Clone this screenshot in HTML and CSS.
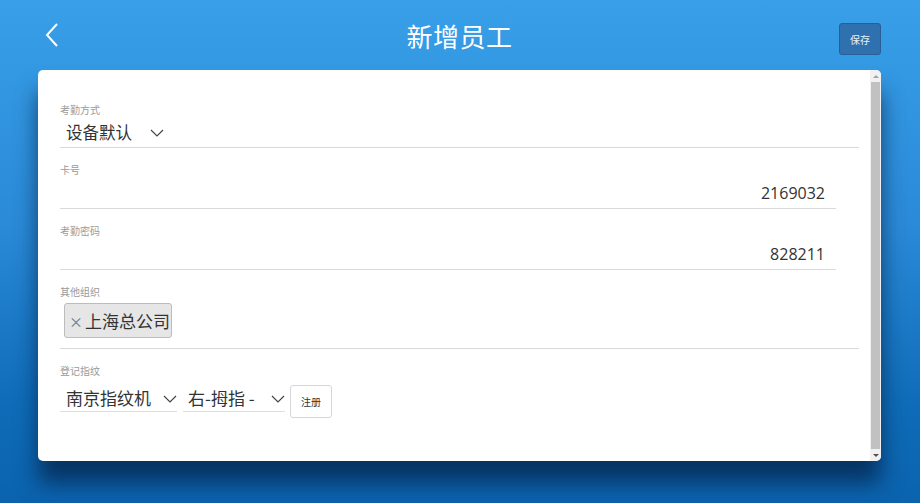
FILE: index.html
```html
<!DOCTYPE html>
<html lang="zh">
<head>
<meta charset="utf-8">
<link rel="stylesheet" href="styles.css">
</head>
<body>
<div class="page">
  <header class="topbar">
    <div class="side">
      <div class="back">
        <svg width="14" height="24" viewBox="0 0 14 24"><path d="M12 1 L2 12 L12 23" fill="none" stroke="#fff" stroke-width="2"/></svg>
      </div>
    </div>
    <h1 class="title">新增员工</h1>
    <div class="side right">
      <button class="save">保存</button>
    </div>
  </header>
  <main class="card">
    <div class="content">
      <div class="field first">
        <div class="label">考勤方式</div>
        <div class="select wide">
          <span class="sel-text">设备默认</span>
          <svg class="chev" width="14" height="8" viewBox="0 0 14 8"><path d="M1 1 L7 7 L13 1" fill="none" stroke="#444" stroke-width="1.2"/></svg>
        </div>
      </div>
      <div class="field">
        <div class="label">卡号</div>
        <div class="input">2169032</div>
      </div>
      <div class="field">
        <div class="label">考勤密码</div>
        <div class="input">828211</div>
      </div>
      <div class="field">
        <div class="label">其他组织</div>
        <div class="tags">
          <span class="tag"><span class="x">×</span>上海总公司</span>
        </div>
      </div>
      <div class="field">
        <div class="label">登记指纹</div>
        <div class="finger">
          <div class="select s1">
            <span class="sel-text">南京指纹机</span>
            <svg class="chev" width="14" height="8" viewBox="0 0 14 8"><path d="M1 1 L7 7 L13 1" fill="none" stroke="#444" stroke-width="1.2"/></svg>
          </div>
          <div class="select s2">
            <span class="sel-text">右-拇指 -</span>
            <svg class="chev" width="14" height="8" viewBox="0 0 14 8"><path d="M1 1 L7 7 L13 1" fill="none" stroke="#444" stroke-width="1.2"/></svg>
          </div>
          <button class="reg">注册</button>
        </div>
      </div>
    </div>
    <div class="scrollbar">
      <div class="arrow up"></div>
      <div class="thumb"></div>
      <div class="arrow down"></div>
    </div>
  </main>
</div>
</body>
</html>
```
FILE: styles.css
```css
* { box-sizing: border-box; }
html, body { margin: 0; padding: 0; }
body {
  width: 920px;
  height: 503px;
  overflow: hidden;
  font-family: "Noto Sans CJK SC", "Open Sans", sans-serif;
  background: linear-gradient(180deg, #389fe8 0%, #2a8ad8 45%, #0f6cb8 80%, #0b63ae 100%);
}
.page { padding: 0 39px 0 38px; }
.topbar {
  height: 70px;
  display: flex;
  align-items: flex-start;
}
.side {
  width: 60px;
  flex: none;
}
.side.right {
  display: flex;
  justify-content: flex-end;
}
.back {
  width: 14px;
  height: 24px;
  margin: 23px 0 0 7px;
}
.back svg { display: block; }
.title {
  flex: 1;
  margin: 18px 0 0 0;
  text-align: center;
  color: #fff;
  font-weight: 400;
  font-size: 26px;
  line-height: 36px;
  letter-spacing: 0.5px;
}
.save {
  width: 42px;
  height: 32px;
  margin-top: 23px;
  background: #2f70ae;
  border: 1px solid #285f97;
  border-radius: 3px;
  color: #e8f1fa;
  font-family: "Noto Sans CJK SC", sans-serif;
  font-size: 10px;
  padding: 0;
}
.card {
  height: 391px;
  background: #fff;
  border-radius: 5px;
  display: flex;
  overflow: hidden;
  box-shadow: 0 22px 22px rgba(4, 30, 65, 0.7);
}
.content {
  flex: 1;
  padding: 33px 11px 0 22px;
}
.field { margin-top: 15px; }
.field.first { margin-top: 0; }
.label {
  font-size: 10px;
  line-height: 14px;
  color: #9a9a9a;
}
.select {
  display: flex;
  align-items: center;
  border-bottom: 1px solid #d9d9d9;
  color: #333;
  font-size: 16.5px;
}
.select.wide { height: 31px; }
.sel-text { padding-left: 6px; line-height: 22px; white-space: nowrap; flex: none; }
.select.wide .chev { margin-left: 18px; margin-top: 1px; }
.input {
  width: calc(100% - 23px);
  height: 32px;
  border-bottom: 1px solid #d9d9d9;
  text-align: right;
  font-family: "Open Sans", "Noto Sans", sans-serif;
  font-size: 16px;
  color: #333;
  line-height: 32px;
  padding-right: 11px;
}
.tags {
  padding: 4px 0 10px 4px;
  border-bottom: 1px solid #d9d9d9;
}
.tag {
  display: inline-flex;
  align-items: center;
  height: 35px;
  padding: 0 1px 0 4px;
  background: #e6e6e6;
  border: 1px solid #bcbcbc;
  border-radius: 3px;
  font-size: 17px;
  color: #333;
}
.tag .x { color: #777; font-size: 14px; margin-right: 2px; }
.finger {
  display: flex;
  align-items: flex-end;
  padding-top: 6px;
}
.finger .select {
  height: 28px;
  margin-bottom: 6px;
  border-bottom-color: #dedede;
  font-size: 17px;
  flex: none;
  overflow: visible;
}
.s1 { width: 117px; }
.s2 { width: 102px; margin-left: 6px; }
.s1 .chev { margin-left: 12px; }
.s2 .sel-text { padding-left: 5px; }
.s2 .chev { margin-left: 16px; }
.finger .chev { margin-top: 2px; flex: none; }
.reg {
  width: 42px;
  height: 33px;
  margin-left: 5px;
  background: #fff;
  border: 1px solid #d6d6d6;
  border-radius: 3px;
  font-family: "Noto Sans CJK SC", sans-serif;
  font-size: 10px;
  color: #333;
  padding: 0;
  flex: none;
}
.scrollbar {
  width: 11px;
  display: flex;
  flex-direction: column;
  background: #f1f1f1;
  padding: 2px 1px;
}
.thumb {
  flex: 1;
  background: #c1c1c1;
  margin: 2px 0;
}
.arrow {
  height: 8px;
  display: flex;
  justify-content: center;
  align-items: center;
}
.arrow::after {
  content: "";
  border-left: 3px solid transparent;
  border-right: 3px solid transparent;
}
.arrow.up::after { border-bottom: 3px solid #a3a3a3; }
.arrow.down::after { border-top: 3px solid #505050; }
```
